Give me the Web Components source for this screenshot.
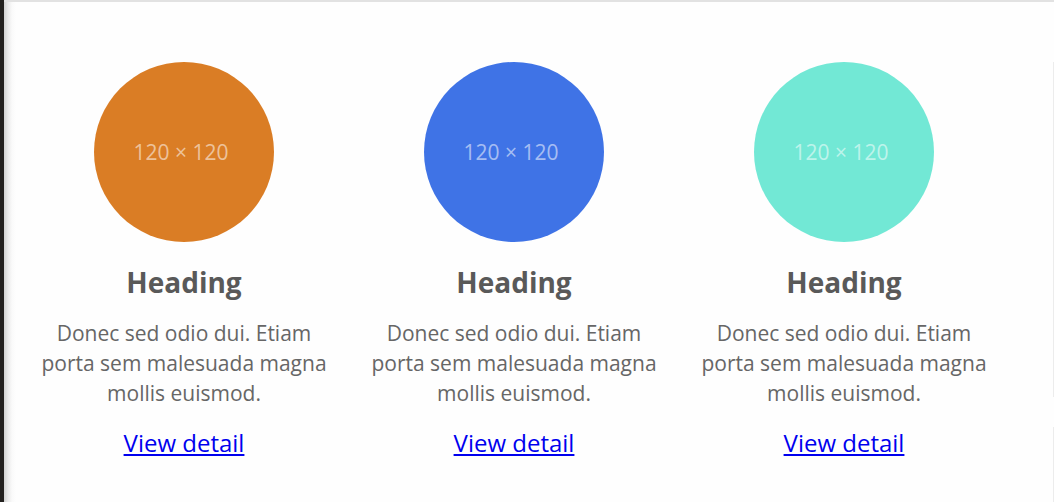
<!DOCTYPE html>
<html lang="en">
<head>
<meta charset="utf-8">
<title>Features</title>
<style>
body { margin: 0; background: #fefefe; }
</style>
</head>
<body>
<preview-frame>
  <feature-card tone="#da7d25"></feature-card>
  <feature-card tone="#3f73e6"></feature-card>
  <feature-card tone="#72e8d5"></feature-card>
</preview-frame>
<script>
class PreviewFrame extends HTMLElement {
  constructor() {
    super();
    this.attachShadow({ mode: "open" }).innerHTML = `
      <style>
        :host { display: flex; box-sizing: border-box; min-height: 100vh; border-left: 4px solid #23211f;
          font-family: "Open Sans", sans-serif; color: #595959;
          background:
            linear-gradient(#e2e2e2, #e2e2e2) 0 0 / 100% 2px no-repeat,
            linear-gradient(to right, #d2d2d2, #ebebeb 4px, #fafafa 8px, #fefefe 12px); }
        main { flex: 1; padding: 62px 44px 40px 15px;
          display: grid; grid-template-columns: repeat(3, minmax(0, 1fr)); align-items: start; }
        .next { width: 1px; padding-top: 62px; display: flex; flex-direction: column; gap: 30px; }
        .next div { background: #ececec; }
        .next div:first-child { height: 335px; }
        .next div:last-child { flex: 1; }
      </style>
      <main><slot></slot></main>
      <div class="next"><div></div><div></div></div>`;
  }
}
class FeatureCard extends HTMLElement {
  constructor() {
    super();
    this.attachShadow({ mode: "open" }).innerHTML = `
      <style>
        :host { display: block; text-align: center; padding: 0 20px; }
        .disc { box-sizing: border-box; width: 180px; height: 180px; border-radius: 50%; margin: 0 auto;
          display: flex; align-items: center; justify-content: center; padding-right: 6px;
          color: rgba(255,255,255,.55); font-size: 21px; line-height: 30px; }
        h2 { margin: 20px 0 0; font-size: 28px; line-height: 40px; font-weight: 700; }
        p { margin: 16px 0 0; font-size: 21px; line-height: 30px; color: #666; }
        .more { margin-top: 17px; font-size: 24px; line-height: 36px; }
        a { color: #0000ee; }
      </style>
      <div class="disc"><span>120 × 120</span></div>
      <h2>Heading</h2>
      <p>Donec sed odio dui. Etiam porta sem malesuada magna mollis euismod.</p>
      <p class="more"><a href="#detail">View detail</a></p>`;
  }
  connectedCallback() {
    this.shadowRoot.querySelector(".disc").style.background = this.getAttribute("tone");
  }
}
customElements.define("preview-frame", PreviewFrame);
customElements.define("feature-card", FeatureCard);
</script>
</body>
</html>
